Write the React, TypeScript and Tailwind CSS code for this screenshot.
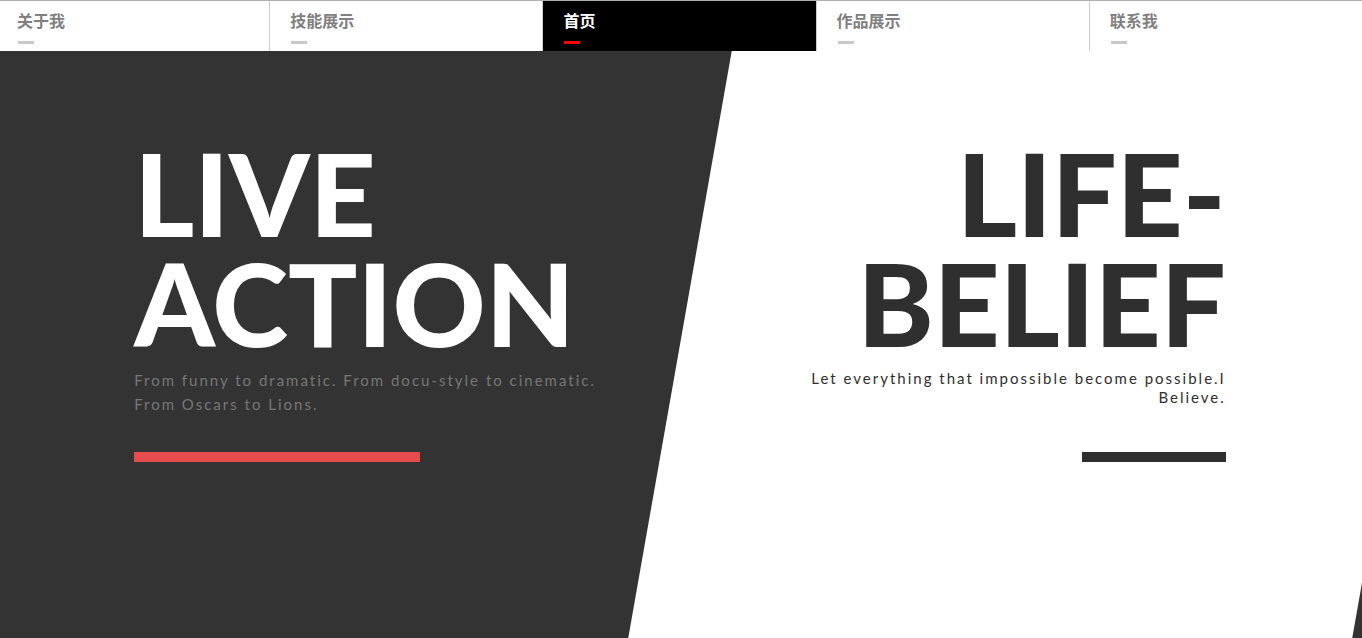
const navItems = [
  { label: '关于我', href: '#about' },
  { label: '技能展示', href: '#skills' },
  { label: '首页', href: '#home', active: true },
  { label: '作品展示', href: '#works' },
  { label: '联系我', href: '#contact' },
];

function NavBar() {
  return (
    <nav className="overflow-hidden border-t border-[#b0b0b0] bg-white">
      <ul className="-ml-1 flex">
        {navItems.map(({ label, href, active }) => (
          <li key={href} className="flex-1 border-l border-[#cccccc]">
            <a
              href={href}
              aria-current={active ? 'page' : undefined}
              className={
                active
                  ? 'block h-[50px] bg-black pt-2 pl-5 text-base font-bold text-white'
                  : 'block h-[50px] pt-2 pl-5 text-base font-bold text-[#808080]'
              }
            >
              <span className="block">{label}</span>
              <span
                className={
                  active
                    ? 'mt-2 ml-px block h-[3px] w-4 bg-[#ff0000]'
                    : 'mt-2 ml-px block h-[3px] w-4 bg-[#c8c8c8]'
                }
              />
            </a>
          </li>
        ))}
      </ul>
    </nav>
  );
}

function Hero() {
  return (
    <main className="relative flex flex-1 justify-between overflow-hidden bg-[#333333] pt-[86px] pr-[10%] pb-16 pl-[9.85%]">
      {/* Slanted white panel behind the right column */}
      <div
        aria-hidden="true"
        className="absolute inset-y-0 left-[49.9%] w-[53.15%] -skew-x-10 bg-white"
      />
      <section className="relative w-[46%]">
        <h1 className="text-[115px] leading-[110px] font-black text-white">
          <span className="block">LIVE</span>
          <span className="block">ACTION</span>
        </h1>
        <p className="mt-[11px] text-[15px] leading-6 tracking-[2px] text-[#777777]">
          <span className="block">From funny to dramatic. From docu-style to cinematic.</span>
          <span className="block">From Oscars to Lions.</span>
        </p>
        <div className="mt-9 h-2.5 w-[57%] bg-[#e64c4c]" />
      </section>
      <section className="relative flex w-[44%] flex-col items-end text-right">
        <h2 className="text-[115px] leading-[110px] font-black text-[#2f2f2f]">
          <span className="block">LIFE-</span>
          <span className="block">BELIEF</span>
        </h2>
        <p className="mt-3 text-[15px] leading-[19px] tracking-[2px] text-[#2f2f2f]">
          <span className="block">Let everything that impossible become possible.I</span>
          <span className="block">Believe.</span>
        </p>
        <div className="mt-[45px] h-2.5 w-[30%] bg-[#2f2f2f]" />
      </section>
    </main>
  );
}

export default function App() {
  return (
    <div className="flex min-h-screen flex-col font-[Lato,'Noto_Sans_CJK_SC',sans-serif]">
      <NavBar />
      <Hero />
    </div>
  );
}
